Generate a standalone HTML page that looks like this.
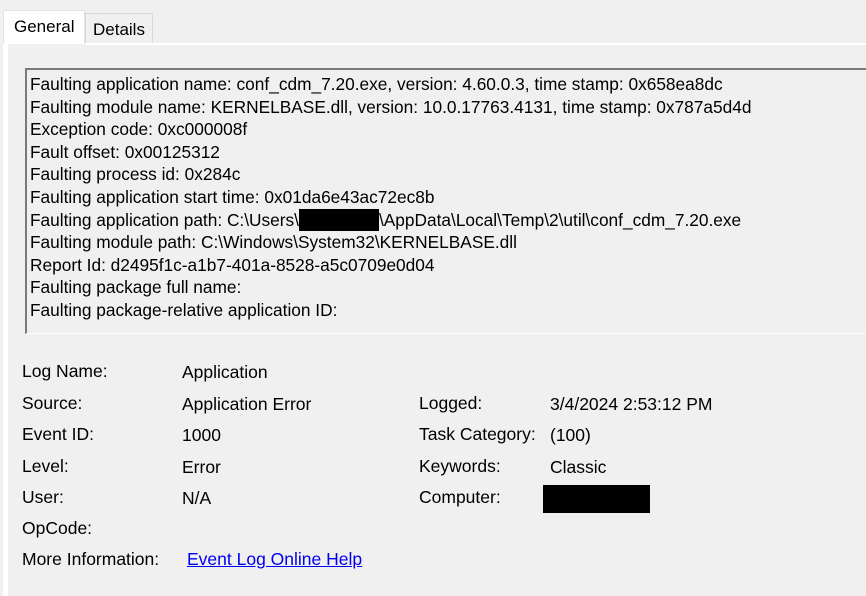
<!DOCTYPE html>
<html><head><style>
body{margin:0;width:866px;height:596px;background:#f0f0f0;position:relative;overflow:hidden;font-family:"Liberation Sans",sans-serif;color:#000}
.a{position:absolute;white-space:nowrap}
#tabg{left:3px;top:10px;width:82px;height:34px;background:#fff;border:1px solid #e3e3e3;border-bottom:none;box-sizing:border-box;font-size:17px;padding:6px 0 0 10px}
#tabd{left:85px;top:13px;width:68px;height:30px;background:#f0f0f0;border:1px solid #d9d9d9;border-bottom:none;box-sizing:border-box;font-size:17px;padding:6px 0 0 7px}
#hl{left:85px;top:43px;width:781px;height:2px;background:#fff}
#vl{left:3px;top:43px;width:5px;height:553px;background:#fff}
#box{left:25px;top:68px;width:860px;height:266px;border-top:2px solid #7a7a7a;border-left:2px solid #7a7a7a;border-bottom:1px solid #fff;box-sizing:border-box;padding:3px 0 0 3px;font-size:17.3px;line-height:22.6px}
.l{font-size:17.5px}
.red{background:#000}
a{color:#0000ee}
</style></head><body>
<div class="a" id="hl"></div><div class="a" id="vl"></div>
<div class="a" id="tabg">General</div>
<div class="a" id="tabd">Details</div>
<div class="a" id="box">Faulting application name: conf_cdm_7.20.exe, version: 4.60.0.3, time stamp: 0x658ea8dc<br>Faulting module name: KERNELBASE.dll, version: 10.0.17763.4131, time stamp: 0x787a5d4d<br>Exception code: 0xc000008f<br>Fault offset: 0x00125312<br>Faulting process id: 0x284c<br>Faulting application start time: 0x01da6e43ac72ec8b<br>Faulting application path: C:\Users\<span style="display:inline-block;width:80px;height:22px;background:#000;vertical-align:-5px"></span>\AppData\Local\Temp\2\util\conf_cdm_7.20.exe<br>Faulting module path: C:\Windows\System32\KERNELBASE.dll<br>Report Id: d2495f1c-a1b7-401a-8528-a5c0709e0d04<br>Faulting package full name:<br>Faulting package-relative application ID:</div>

<div class="a l" style="left:22px;top:361px">Log Name:</div><div class="a l" style="left:182px;top:362px">Application</div>
<div class="a l" style="left:22px;top:393px">Source:</div><div class="a l" style="left:182px;top:394px">Application Error</div>
<div class="a l" style="left:22px;top:424px">Event ID:</div><div class="a l" style="left:182px;top:425px">1000</div>
<div class="a l" style="left:22px;top:456px">Level:</div><div class="a l" style="left:182px;top:457px">Error</div>
<div class="a l" style="left:22px;top:487px">User:</div><div class="a l" style="left:182px;top:488px">N/A</div>
<div class="a l" style="left:22px;top:518px">OpCode:</div>
<div class="a l" style="left:22px;top:549px">More Information:</div><div class="a l" style="left:187px;top:549px"><a href="#">Event Log Online Help</a></div>
<div class="a l" style="left:419px;top:393px">Logged:</div><div class="a l" style="left:550px;top:394px">3/4/2024 2:53:12 PM</div>
<div class="a l" style="left:419px;top:424px">Task Category:</div><div class="a l" style="left:550px;top:425px">(100)</div>
<div class="a l" style="left:419px;top:456px">Keywords:</div><div class="a l" style="left:550px;top:457px">Classic</div>
<div class="a l" style="left:419px;top:487px">Computer:</div>
<div class="a red" style="left:543px;top:485px;width:107px;height:28px"></div>
</body></html>
